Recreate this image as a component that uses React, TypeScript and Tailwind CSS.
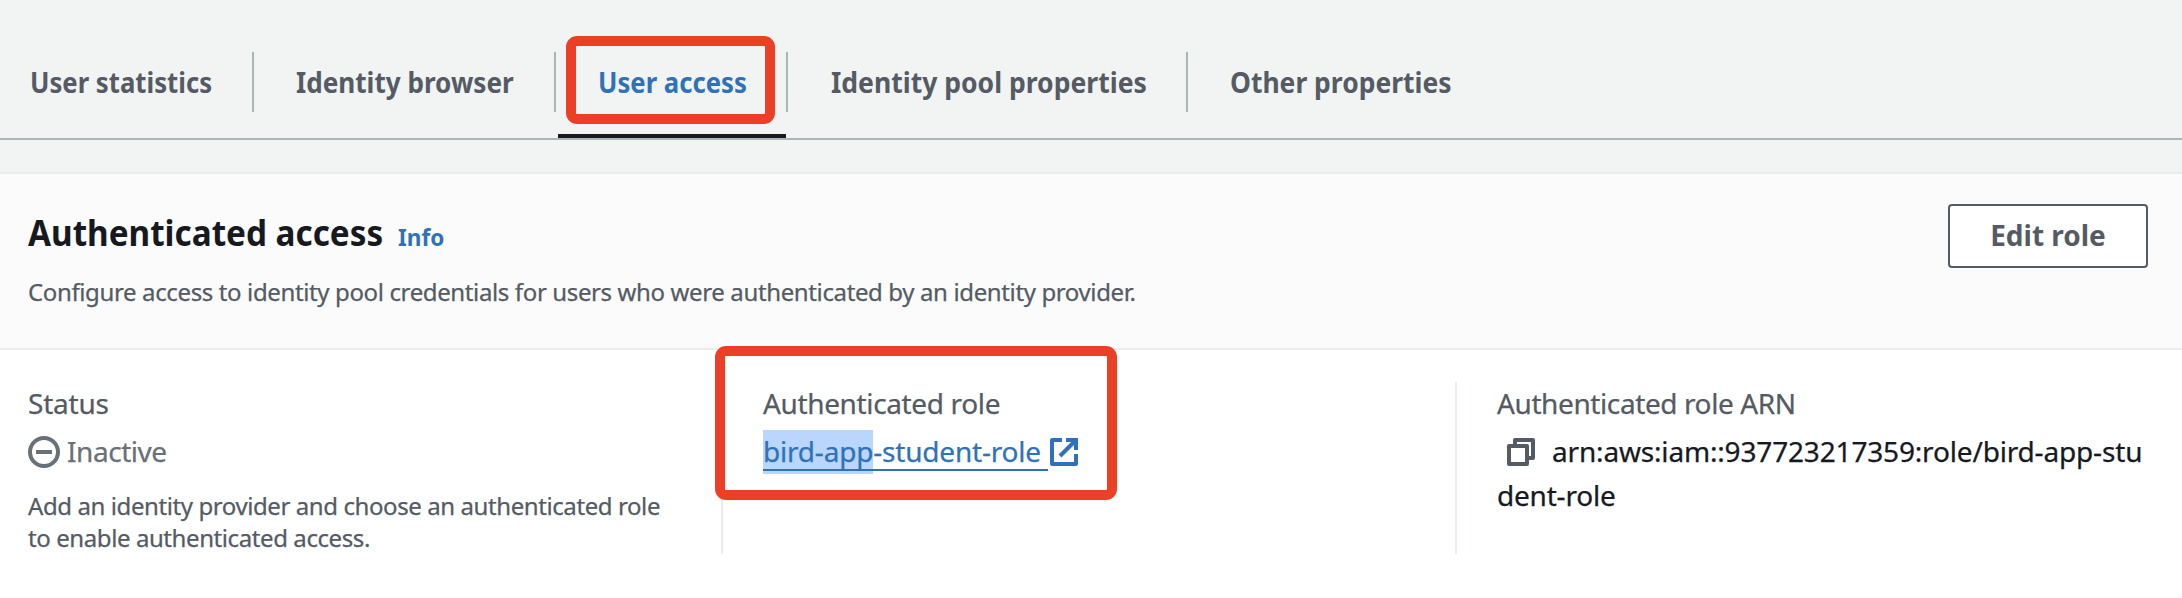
import React from "react";
import clsx from "clsx";

const tabs = [
  { label: "User statistics", box: "w-[254px] pl-[30px] border-r-2", text: "scale-x-[0.918]" },
  { label: "Identity browser", box: "w-[302px] pl-[42px] border-r-2", text: "scale-x-[0.933]" },
  { label: "User access", box: "w-[232px] pl-[41.5px] border-r-2", text: "scale-x-[0.918]", active: true },
  { label: "Identity pool properties", box: "w-[400px] pl-[42.5px] border-r-2", text: "scale-x-[0.948]" },
  { label: "Other properties", box: "w-[320px] pl-[42px]", text: "scale-x-[0.945]" },
];

function Highlight({ className }: { className: string }) {
  return <div className={clsx("pointer-events-none absolute z-10 rounded-[11px] border-10 border-[#eb4026]", className)} />;
}

function Tabs() {
  return (
    <nav className="flex h-[140px] border-b-2 border-[#aab7b8] pt-[52px]">
      {tabs.map((tab) => (
        <div key={tab.label} className="relative h-[86px]">
          <button
            className={clsx(
              "block h-[60px] border-[#aab7b8] text-left text-[28px] leading-[58px] font-bold whitespace-nowrap",
              tab.box,
              tab.active ? "text-[#2f72ba]" : "text-[#545b64]",
            )}
          >
            <span className={clsx("inline-block origin-left", tab.text)}>{tab.label}</span>
          </button>
          {tab.active && (
            <>
              <div className="absolute bottom-0 left-[2px] h-1 w-[228px] bg-[#16191f]" />
              <Highlight className="top-[-16px] left-[10px] h-[88px] w-[209px]" />
            </>
          )}
        </div>
      ))}
    </nav>
  );
}

function Header() {
  return (
    <header className="flex h-[178px] items-start justify-between border-y-2 border-[#eaeded] bg-[#fbfbfb] pt-[30px] pr-[34px] pl-7">
      <div>
        <div className="flex items-baseline whitespace-nowrap">
          <h2 className="w-[370px] origin-left scale-x-[0.924] text-[36px] leading-[58px] font-bold text-[#16191f]">Authenticated access</h2>
          <a className="origin-left scale-x-[0.94] text-2xl font-bold text-[#2f72ba]">Info</a>
        </div>
        <p className="mt-[10px] text-2xl leading-10 tracking-[-0.37px] text-[#545b64] [-webkit-text-stroke:0.25px]">
          Configure access to identity pool credentials for users who were authenticated by an identity provider.
        </p>
      </div>
      <button className="h-16 w-[200px] rounded-[4px] border-2 border-[#545b64] bg-white pb-[2px] text-[28px] leading-[58px] font-bold text-[#545b64]">
        Edit role
      </button>
    </header>
  );
}

function StatusIcon() {
  return (
    <svg className="size-8" viewBox="0 0 32 32" fill="none" stroke="#687078" strokeWidth="4">
      <circle cx="16" cy="16" r="14" />
      <path d="M8 16h16" />
    </svg>
  );
}

function ExternalIcon() {
  return (
    <svg className="size-7" viewBox="0 0 28 28" fill="none" stroke="#2f72ba" strokeWidth="4">
      <path d="M12 2H2v24h24V16" strokeLinejoin="round" />
      <path d="M16 2h10v10M26 2L10 18" />
    </svg>
  );
}

function CopyIcon() {
  return (
    <svg className="size-7" viewBox="0 0 28 28" fill="none" stroke="#545b64" strokeWidth="4" strokeLinejoin="round">
      <path d="M2 8h18v18H2z" />
      <path d="M8 6V2h18v18h-4" />
    </svg>
  );
}

export default function App() {
  return (
    <main className="h-[598px] w-[2182px] overflow-hidden bg-[#f2f4f4] font-['Noto_Sans','Open_Sans',sans-serif]">
      <Tabs />
      <section className="mt-8 bg-white">
        <Header />
        <div className="flex h-[248px] pt-8 text-[28px] whitespace-nowrap [-webkit-text-stroke:0.25px]">
          <div className="h-[172px] w-[721px] pl-7 text-[#545b64]">
            <div className="h-[46px] leading-[42px] tracking-[-0.2px]">Status</div>
            <div className="flex h-12 items-center gap-[7px] leading-[44px] tracking-[-0.45px] text-[#687078]">
              <StatusIcon />
              <span className="pb-[2px]">Inactive</span>
            </div>
            <p className="mt-[14px] text-2xl leading-8 tracking-[-0.41px]">
              Add an identity provider and choose an authenticated role
              <br />
              to enable authenticated access.
            </p>
          </div>
          <div className="relative h-[172px] w-[734px] border-l-2 border-[#eaeded] pl-10">
            <div className="h-12 leading-[42px] tracking-[-0.36px] text-[#545b64]">Authenticated role</div>
            <div className="flex h-11 tracking-[-0.2px] text-[#2f72ba]">
              <div className="flex h-[41px] w-[285px] border-b-2 border-[#2f72ba] leading-[42px]">
                <span className="h-11 bg-[#bad6fc]">
                  <span className="block h-[41px] border-b-2 border-[#2f72ba]">bird-app</span>
                </span>
                <span>-student-role</span>
              </div>
              <span className="mt-2 ml-[2px]">
                <ExternalIcon />
              </span>
            </div>
            <Highlight className="top-[-36px] left-[-8px] h-[154px] w-[402px]" />
          </div>
          <div className="h-[172px] w-[727px] border-l-2 border-[#eaeded] pl-10">
            <div className="h-12 leading-[42px] tracking-[-0.4px] text-[#545b64]">Authenticated role ARN</div>
            <div className="flex h-11 items-center pl-[10px] leading-[44px] tracking-[-0.17px] text-[#16191f]">
              <CopyIcon />
              <span className="ml-[17px] pb-[2px]">arn:aws:iam::937723217359:role/bird-app-stu</span>
            </div>
            <div className="leading-[42px] tracking-[-0.2px] text-[#16191f]">dent-role</div>
          </div>
        </div>
      </section>
    </main>
  );
}
